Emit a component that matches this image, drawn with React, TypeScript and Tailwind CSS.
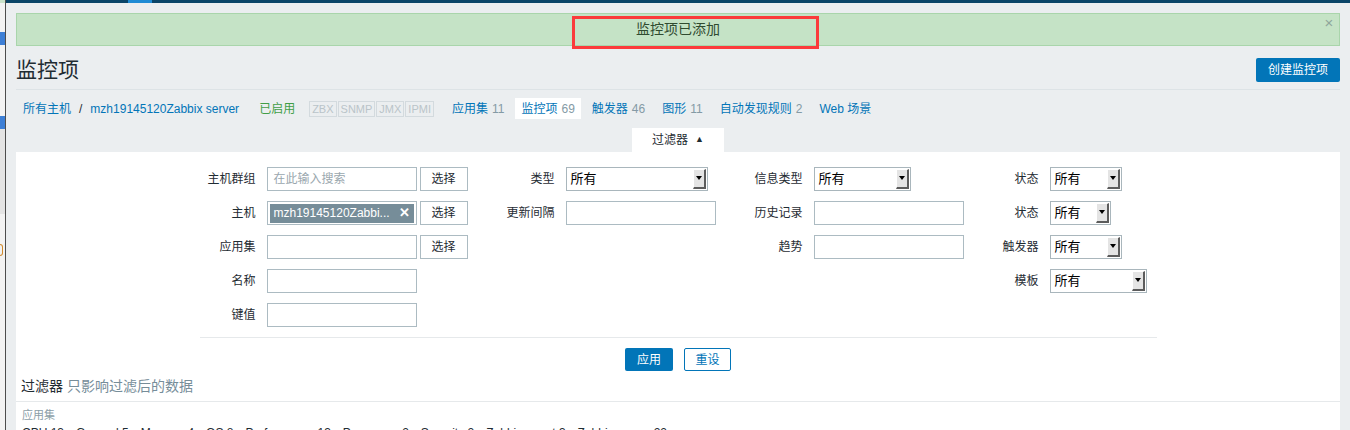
import React from "react";

const font = "font-['Liberation_Sans','Noto_Sans_CJK_SC',sans-serif]";

function Select({ width }: { width: string }) {
  return (
    <div className={`flex h-6 items-stretch border border-[#a9b6bc] bg-white ${width}`}>
      <span className="flex-1 pl-[4px] leading-[22px] text-[13px] text-black">所有</span>
      <div className="my-[1px] mr-[1px] flex w-[13px] justify-center border-b-2 border-r-2 border-l border-t border-b-[#5c5c5c] border-r-[#5c5c5c] border-l-white border-t-white bg-[#e4e4e4] pt-[6px]">
        <div className="h-0 w-0 border-x-[3px] border-t-[4px] border-x-transparent border-t-black" />
      </div>
    </div>
  );
}

function Input({ placeholder }: { placeholder?: string }) {
  return (
    <div className="h-6 w-[150px] border border-[#acbbc2] bg-white px-[6px] leading-[22px] text-[#9aa7ae]">
      {placeholder}
    </div>
  );
}

function PickBtn() {
  return (
    <div className="flex h-6 w-[48px] items-center justify-center border border-[#acbbc2] bg-white text-[#1f2c33]">
      选择
    </div>
  );
}

function Label({ text }: { text: string }) {
  return <div className="pr-[11px] text-right leading-6 text-[#1f2c33]">{text}</div>;
}

function App() {
  const tabs = [
    { name: "应用集", count: "11" },
    { name: "监控项", count: "69", active: true },
    { name: "触发器", count: "46" },
    { name: "图形", count: "11" },
    { name: "自动发现规则", count: "2" },
    { name: "Web 场景", count: "" },
  ];

  const apps = [
    "CPU 13", "General 5", "Memory 4", "OS 8", "Performance 13",
    "Processes 2", "Security 2", "Zabbix agent 3", "Zabbix server 22",
  ];

  return (
    <div className={`flex h-[430px] w-[1350px] items-start overflow-hidden bg-[#ebeef0] text-[12px] ${font}`}>
      {/* other window sliver */}
      <div className="flex h-[430px] w-[5px] shrink-0 flex-col bg-[#f3f3f3]">
        <div className="h-[3px] shrink-0 bg-[#c9e2c9]" />
        <div className="mt-[29px] h-[13px] shrink-0 bg-[#3d7fd6]" />
        <div className="mt-[71px] h-[13px] shrink-0 bg-[#3d7fd6]" />
        <div className="h-[85px] shrink-0 bg-[#e4e4e4]" />
        <div className="mt-[30px] h-[12px] w-[3px] shrink-0 rounded-r-full border border-l-0 border-[#d08a2c]" />
      </div>
      <div className="h-[430px] w-[1px] shrink-0 bg-[#4d4d4d]" />

      <div className="flex flex-1 flex-col">
        {/* top navigation bar */}
        <div className="flex h-[3px] shrink-0 bg-[#0a4568]">
          <div className="ml-[122px] w-[24px] bg-[#1f8bd4]" />
        </div>

        <div className="flex shrink-0 flex-col px-[10px]">
          {/* message */}
          <div className="relative mt-[10px] flex h-[33px] border border-[#a9d5ab] bg-[#c5e3c6]">
            <div className="w-[20px]" />
            <div className="flex-1 pt-[6px] text-center text-[14px] leading-[18px] text-[#304b30]">监控项已添加</div>
            <div className="w-[20px] text-center text-[15px] leading-[18px] text-[#8fa69b]">×</div>
            <div className="absolute left-[555px] top-[2px] h-[33px] w-[247px] border-[3px] border-[#fb3b3b]" />
          </div>

          {/* header */}
          <div className="flex items-center justify-between border-b border-[#dde3e6] pb-[7px] pt-[12px]">
            <h1 className="text-[21px] leading-6 text-[#1f2c33]">监控项</h1>
            <div className="flex h-6 items-center rounded-[2px] bg-[#0275b8] px-[12px] text-white">创建监控项</div>
          </div>

          {/* breadcrumbs */}
          <div className="mt-[8px] flex h-[21px] items-center">
            <span className="ml-[7px] text-[#0275b8]">所有主机</span>
            <span className="mx-[8px] text-[#1f2c33]">/</span>
            <span className="text-[#0275b8]">mzh19145120Zabbix server</span>
            <span className="ml-[20px] text-[#429e47]">已启用</span>
            <div className="ml-[14px] flex gap-[1px]">
              {["ZBX", "SNMP", "JMX", "IPMI"].map((s) => (
                <span key={s} className="h-[16px] border border-[#d3dade] px-[2px] text-[11px] leading-[14px] text-[#bac4c9]">
                  {s}
                </span>
              ))}
            </div>
            <div className="ml-[12px] flex gap-[5px]">
              {tabs.map((t) => (
                <div
                  key={t.name}
                  className={t.active ? "flex h-[21px] items-center bg-white px-[6px]" : "flex h-[21px] items-center px-[6px]"}
                >
                  <span className="text-[#0275b8]">{t.name}</span>
                  {t.count && <span className="ml-[4px] text-[#849aa5]">{t.count}</span>}
                </div>
              ))}
            </div>
          </div>

          {/* filter tab */}
          <div className="mt-[9px] flex justify-center">
            <div className="flex h-[24px] w-[92px] items-center justify-center gap-[7px] bg-white text-[#1f2c33]">
              <span>过滤器</span>
              <span className="text-[9px]">▲</span>
            </div>
          </div>

          {/* filter body */}
          <div className="flex h-[300px] flex-col bg-white">
            <div className="mx-auto mt-[15px] grid w-[957px] grid-cols-[67px_201px_98px_150px_98px_150px_86px_107px] gap-y-[10px]">
              <Label text="主机群组" />
              <div className="flex gap-[3px]"><Input placeholder="在此输入搜索" /><PickBtn /></div>
              <Label text="类型" />
              <Select width="w-[142px]" />
              <Label text="信息类型" />
              <Select width="w-[97px]" />
              <Label text="状态" />
              <Select width="w-[72px]" />

              <Label text="主机" />
              <div className="flex gap-[3px]">
                <div className="flex h-6 w-[150px] items-center border border-[#acbbc2] bg-white px-[2px]">
                  <div className="flex h-[19px] flex-1 items-center justify-between bg-[#768d99] pl-[4px] pr-[4px] text-white">
                    <span>mzh19145120Zabbi...</span>
                    <span className="text-[13px] font-bold">✕</span>
                  </div>
                </div>
                <PickBtn />
              </div>
              <Label text="更新间隔" />
              <Input />
              <Label text="历史记录" />
              <Input />
              <Label text="状态" />
              <Select width="w-[61px]" />

              <Label text="应用集" />
              <div className="flex gap-[3px]"><Input /><PickBtn /></div>
              <div />
              <div />
              <Label text="趋势" />
              <Input />
              <Label text="触发器" />
              <Select width="w-[72px]" />

              <Label text="名称" />
              <Input />
              <div />
              <div />
              <div />
              <div />
              <Label text="模板" />
              <Select width="w-[97px]" />

              <Label text="键值" />
              <Input />
            </div>

            <div className="mx-auto mt-[10px] h-px w-[957px] bg-[#e6e9eb]" />

            <div className="mt-[10px] flex justify-center gap-[11px]">
              <div className="flex h-[23px] w-[48px] items-center justify-center rounded-[2px] bg-[#0275b8] text-white">应用</div>
              <div className="flex h-[23px] w-[47px] items-center justify-center rounded-[2px] border border-[#0275b8] text-[#0275b8]">重设</div>
            </div>

            <div className="mt-[6px] pl-[5px] text-[14px] leading-[18px]">
              <span className="text-[#1f2c33]">过滤器</span>
              <span className="ml-[4px] text-[#768d99]">只影响过滤后的数据</span>
            </div>

            <div className="mt-[6px] h-px bg-[#e6e9eb]" />

            <div className="mt-[7px] pl-[6px] text-[11px] leading-[13px] text-[#8c9ea7]">应用集</div>
            <div className="mt-[4px] flex gap-[12px] pl-[6px] text-[12px] leading-[14px] text-[#1f2c33]">
              {apps.map((a) => (
                <span key={a}>{a}</span>
              ))}
            </div>
          </div>
        </div>
      </div>
    </div>
  );
}

export default App;
